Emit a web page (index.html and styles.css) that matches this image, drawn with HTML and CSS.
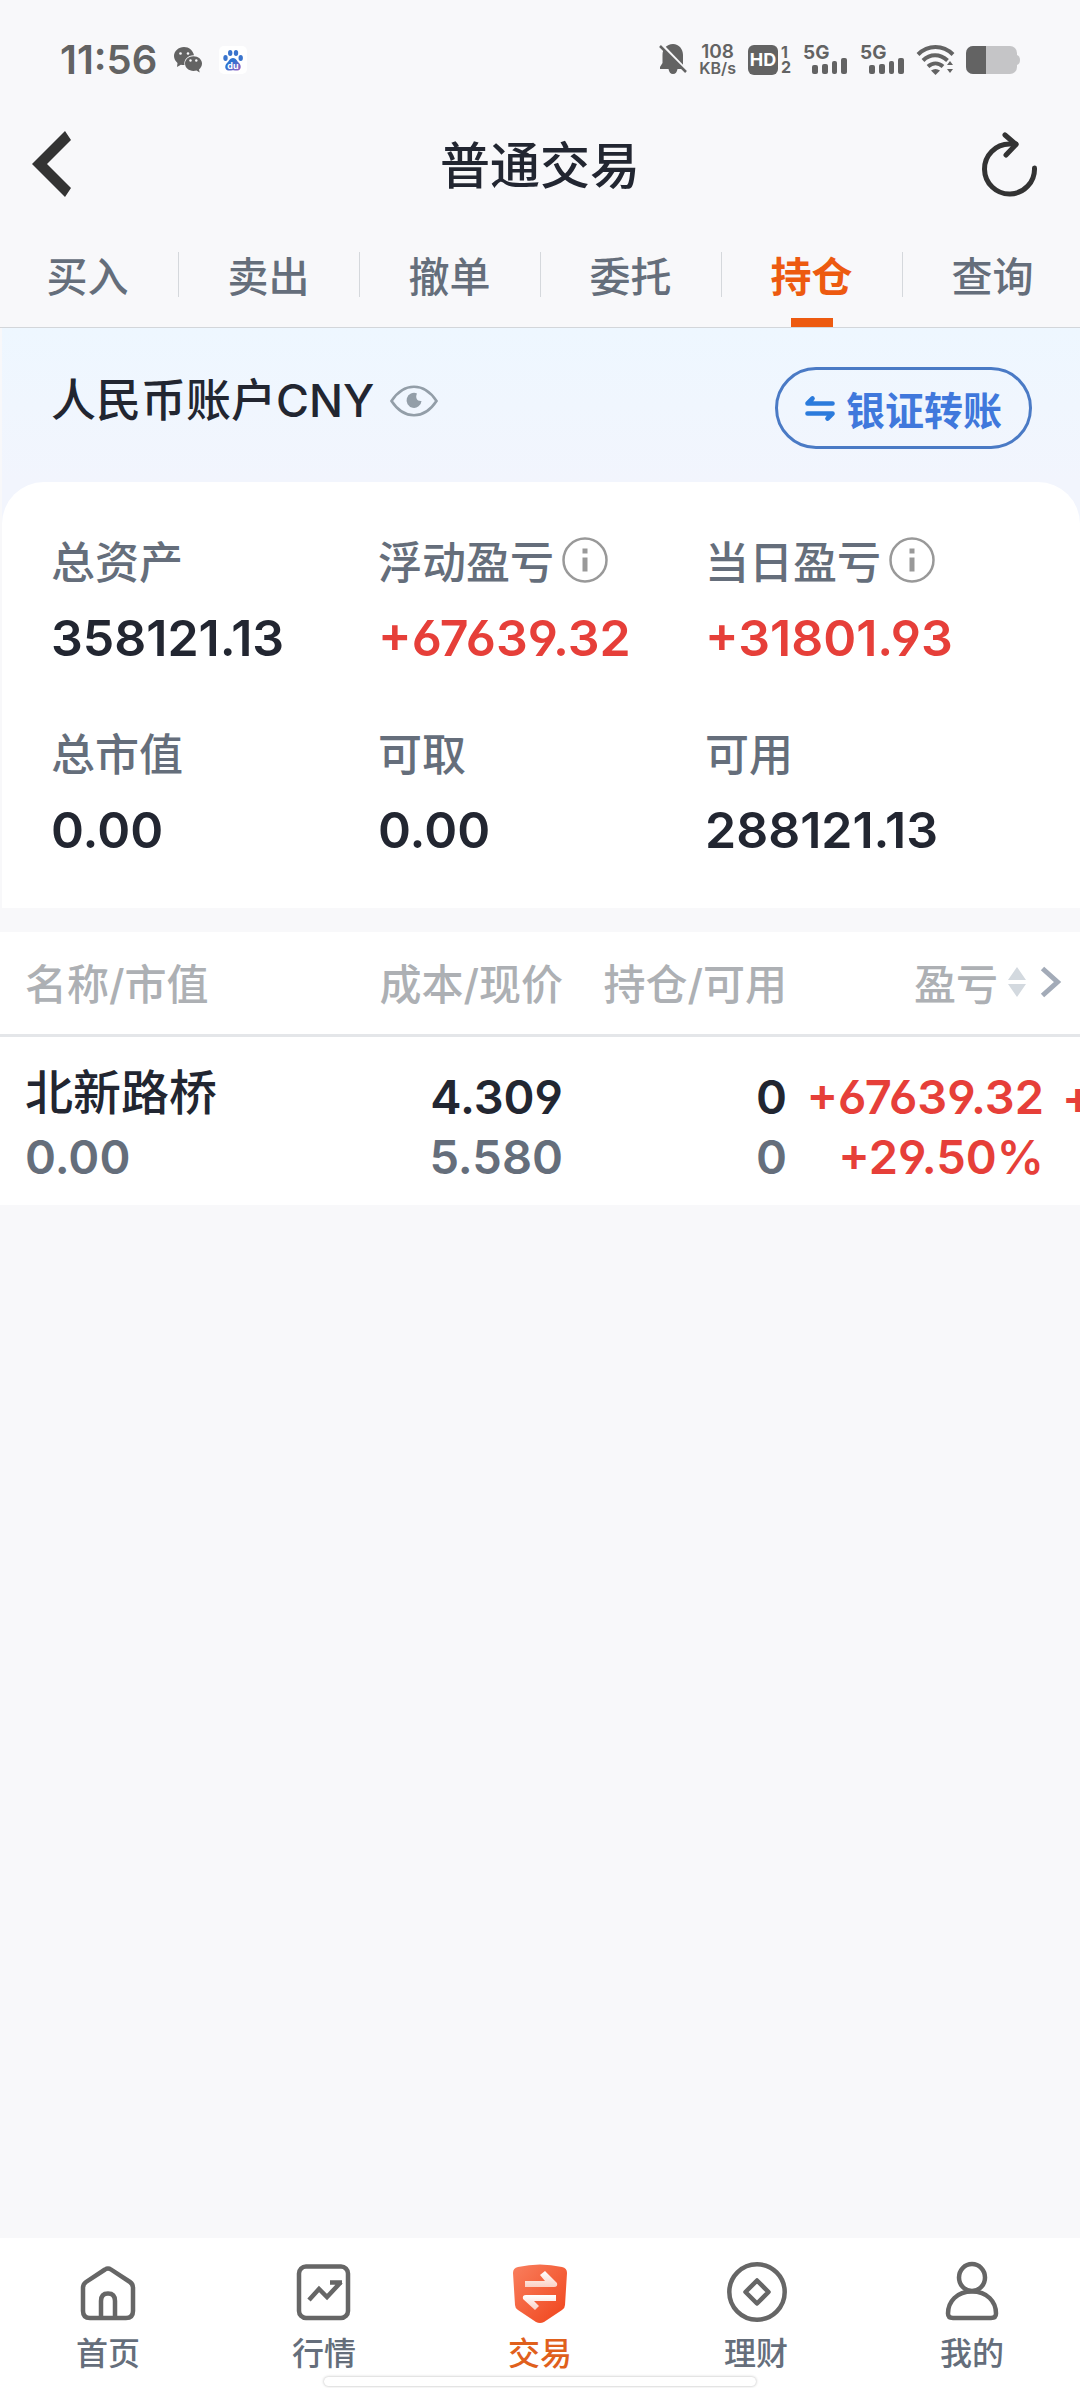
FILE: index.html
```html
<!DOCTYPE html>
<html lang="zh-CN">
<head>
    <meta charset="UTF-8">
    <meta name="viewport" content="width=device-width, initial-scale=1.0">
    <title>普通交易</title>
    <link rel="stylesheet" href="styles.css">
</head>
<body>
    <div class="app">
        <div class="status-bar">
            <div class="status-left">
                <span class="clock">11:56</span>
                <svg width="28" height="26" viewBox="0 0 28 26">
                    <path d="M10 0C4.500 0 0 4 0 9c0 3 1.500 5.300 3.500 6.900L3 20l3.900-2.300c1.200.3 2.300.4 3.600.3C9.500 12.500 14 8 20 8.200 19 3.500 15 0 10 0z" fill="#636363"/>
                    <path d="M19.500 9.300c-4.700 0-8.500 3.200-8.500 7.300s3.800 7.400 8.500 7.400c1 0 2-.2 3-.4l3.200 1.900-.7-3c1.800-1.400 3-3.500 3-5.900 0-4.100-3.800-7.300-8.500-7.300z" fill="#636363"/>
                    <g fill="#f8f8fa"><circle cx="6.500" cy="6.500" r="1.300"/><circle cx="14" cy="6.500" r="1.300"/><circle cx="16.500" cy="13.500" r="1.200"/><circle cx="22.300" cy="13.500" r="1.200"/></g>
                </svg>
                <svg width="28" height="28" viewBox="0 0 28 28">
                    <defs>
                        <linearGradient id="paw" x1="0" y1="0" x2="1" y2="1">
                            <stop offset="0.400" stop-color="#2f73d0"/>
                            <stop offset="1" stop-color="#a05fc0"/>
                        </linearGradient>
                    </defs>
                    <rect width="28" height="28" rx="5" fill="#fff"/>
                    <g fill="#3a74cd"><ellipse cx="6.500" cy="12" rx="2.200" ry="3"/><ellipse cx="11.200" cy="7" rx="2.200" ry="3"/><ellipse cx="17" cy="7" rx="2.200" ry="3"/><ellipse cx="21.700" cy="12" rx="2.200" ry="3"/></g>
                    <path d="M14 12c3 0 4 3 6 5 2.500 2.300 2.500 7-1.500 7.500-2 .2-3-.3-4.500-.3s-2.500.5-4.500.3C5.500 24 5.500 19.300 8 17c2-2 3-5 6-5z" fill="url(#paw)"/>
                    <text class="paw-text" x="14" y="22.500" text-anchor="middle">du</text>
                </svg>
            </div>
            <div class="status-right">
                <svg width="28" height="31" viewBox="0 0 28 31">
                    <path d="M14 0C7.500 0 3.500 5 3.500 11v8L1 23v2h8.500c.5 3 2 5 4.500 5s4-2 4.500-5H25l-1-4V11c0-6-4-11-10-11z" fill="#636363"/>
                    <path d="M3 1l25 26" stroke="#f8f8fa" stroke-width="3"/>
                    <path d="M1 2l26 26" stroke="#636363" stroke-width="2.500"/>
                </svg>
                <span class="speed"><span>108</span><span class="unit">KB/s</span></span>
                <span class="hd-group">
                    <span class="hd">HD</span>
                    <span class="sims"><span>1</span><span>2</span></span>
                </span>
                <svg width="45" height="31" viewBox="0 0 45 31">
                    <text class="net" x="0" y="15">5G</text>
                    <g fill="#636363"><rect x="9" y="21" width="6" height="9" rx="2"/><rect x="19" y="20" width="6" height="10" rx="2"/><rect x="29" y="17" width="5" height="13" rx="2"/><rect x="38" y="14" width="6" height="16" rx="2"/></g>
                </svg>
                <svg width="45" height="31" viewBox="0 0 45 31">
                    <text class="net" x="0" y="15">5G</text>
                    <g fill="#636363"><rect x="9" y="21" width="6" height="9" rx="2"/><rect x="19" y="20" width="6" height="10" rx="2"/><rect x="29" y="17" width="5" height="13" rx="2"/><rect x="38" y="14" width="6" height="16" rx="2"/></g>
                </svg>
                <svg width="37" height="30" viewBox="0 0 37 30">
                    <g fill="none" stroke="#636363" stroke-width="4"><path d="M1 9.500C11-.5 26-.5 36 9.500"/><path d="M6 15.500c7-7 17-7 24.500 0"/><path d="M11 21.500c4.500-4 10.500-4 15 0"/></g>
                    <path d="M14 25.500c3-2 6-2 9 0L18.500 30z" fill="#636363"/>
                    <path d="M30 20l3-4 3 4zM30 24l3 4 3-4z" fill="#636363"/>
                </svg>
                <svg width="54" height="28" viewBox="0 0 54 28">
                    <rect width="51" height="28" rx="7" fill="#c5c5c7"/>
                    <path d="M51 9q3 1 3 5t-3 5z" fill="#c5c5c7"/>
                    <path d="M7 0h13v28H7a7 7 0 0 1-7-7V7a7 7 0 0 1 7-7z" fill="#636363"/>
                </svg>
            </div>
        </div>

        <header class="title-bar">
            <button class="icon-btn" type="button" aria-label="返回">
                <svg width="40" height="68" viewBox="0 0 40 68">
                    <path d="M33 1l6 9-24 24 24 24-6 9L0 34z" fill="#333"/>
                </svg>
            </button>
            <h1>普通交易</h1>
            <button class="icon-btn refresh" type="button" aria-label="刷新">
                <svg width="56" height="66" viewBox="0 0 56 66">
                    <g fill="none" stroke="#333" stroke-width="5" stroke-linecap="round" stroke-linejoin="round">
                        <path d="M52.500 37A25 25 0 1 1 27.500 13H34"/>
                        <path d="M23 4l11 9.500L24 24"/>
                    </g>
                </svg>
            </button>
        </header>

        <nav class="tabs">
            <a class="tab" href="#">买入</a>
            <a class="tab" href="#">卖出</a>
            <a class="tab" href="#">撤单</a>
            <a class="tab" href="#">委托</a>
            <a class="tab active" href="#">持仓</a>
            <a class="tab" href="#">查询</a>
        </nav>

        <main>
            <section class="account">
                <div class="account-head">
                    <div class="account-name">
                        <h2>人民币账户CNY</h2>
                        <button class="icon-btn" type="button" aria-label="隐藏金额">
                            <svg width="48" height="32" viewBox="0 0 48 32">
                                <path d="M1.500 16C14-3 34-3 46.500 16 34 35 14 35 1.500 16z" fill="none" stroke="#939ea8" stroke-width="2.600"/>
                                <path d="M27 8.500c-2 4 0 8 4.500 7.500a7.500 7.500 0 1 1-4.500-7.500z" fill="#939ea8"/>
                            </svg>
                        </button>
                    </div>
                    <button class="transfer" type="button">
                        <svg width="30" height="26" viewBox="0 0 30 26">
                            <g fill="none" stroke="#2b7bdc" stroke-width="4.600" stroke-linecap="round" stroke-linejoin="round">
                                <path d="M27.500 8.500h-25l5-5"/>
                                <path d="M2.500 18.500h25l-5 5"/>
                            </g>
                        </svg>
                        银证转账
                    </button>
                </div>
                <dl class="summary">
                    <div class="item">
                        <dt>总资产</dt>
                        <dd>358121.13</dd>
                    </div>
                    <div class="item">
                        <dt>浮动盈亏<svg class="info" width="46" height="46" viewBox="0 0 46 46"><circle cx="23" cy="23" r="21.500" fill="none" stroke="#999" stroke-width="2.500"/><path d="M20.500 11.500h5v5h-5zM20.500 20.500h5v14h-5z" fill="#999"/></svg></dt>
                        <dd class="up">+67639.32</dd>
                    </div>
                    <div class="item">
                        <dt>当日盈亏<svg class="info" width="46" height="46" viewBox="0 0 46 46"><circle cx="23" cy="23" r="21.500" fill="none" stroke="#999" stroke-width="2.500"/><path d="M20.500 11.500h5v5h-5zM20.500 20.500h5v14h-5z" fill="#999"/></svg></dt>
                        <dd class="up">+31801.93</dd>
                    </div>
                    <div class="item">
                        <dt>总市值</dt>
                        <dd>0.00</dd>
                    </div>
                    <div class="item">
                        <dt>可取</dt>
                        <dd>0.00</dd>
                    </div>
                    <div class="item">
                        <dt>可用</dt>
                        <dd>288121.13</dd>
                    </div>
                </dl>
            </section>

            <section class="positions">
                <table>
                    <colgroup>
                        <col class="w-name">
                        <col class="w-cost">
                        <col class="w-hold">
                        <col class="w-profit">
                        <col>
                    </colgroup>
                    <thead>
                        <tr>
                            <th class="first">名称/市值</th>
                            <th>成本/现价</th>
                            <th>持仓/可用</th>
                            <th colspan="2">
                                <div class="sort">
                                    盈亏
                                    <svg width="18" height="32" viewBox="0 0 18 32"><path d="M0 14L9 1l9 13zM0 18l9 13 9-13z" fill="#d3d9df"/></svg>
                                    <svg class="more" width="21" height="32" viewBox="0 0 21 32"><path d="M2.500 2.500L17.500 16l-15 13.500" fill="none" stroke="#a3abb8" stroke-width="5"/></svg>
                                </div>
                            </th>
                        </tr>
                    </thead>
                    <tbody>
                        <tr>
                            <td class="first"><span class="stock">北新路桥</span><span class="sub">0.00</span></td>
                            <td><span>4.309</span><span class="sub">5.580</span></td>
                            <td><span>0</span><span class="sub">0</span></td>
                            <td class="up"><span>+67639.32</span><span>+29.50%</span></td>
                            <td class="up next"><span>+</span><span></span></td>
                        </tr>
                    </tbody>
                </table>
            </section>
        </main>

        <nav class="bottom-nav">
            <a href="#">
                <svg width="60" height="62" viewBox="0 0 60 62">
                    <g fill="none" stroke="#666" stroke-width="4.500" stroke-linejoin="round">
                        <path d="M27 7.500q3-2 6 0l19 12.500q3 2 3 6v23q0 7-7 7H12q-7 0-7-7V26q0-4 3-6z"/>
                        <path d="M23 56V39q0-7.500 7-7.500t7 7.500v17"/>
                    </g>
                </svg>
                首页
            </a>
            <a href="#">
                <svg width="60" height="62" viewBox="0 0 60 62">
                    <g fill="none" stroke="#666" stroke-width="4.500">
                        <rect x="5" y="4.500" width="49" height="51.500" rx="7"/>
                        <path d="M15 38l10-11 8 8 14-15M36 20.500h12"/>
                    </g>
                </svg>
                行情
            </a>
            <a class="active" href="#">
                <svg width="60" height="62" viewBox="0 0 60 62">
                    <defs>
                        <linearGradient id="shield" x1="0" y1="0" x2="1" y2="1">
                            <stop offset="0" stop-color="#f97f5e"/>
                            <stop offset="1" stop-color="#f0431a"/>
                        </linearGradient>
                        <linearGradient id="arrow" x1="0" y1="0" x2="0" y2="1">
                            <stop offset="0" stop-color="#fff"/>
                            <stop offset="1" stop-color="#fbd0c4"/>
                        </linearGradient>
                    </defs>
                    <path d="M8 5Q30 0 52 5q5 1 5 6l-2 32q0 3-3 5L34 60q-4 2-8 0L8 48q-3-2-3-5L3 11q0-5 5-6z" fill="url(#shield)"/>
                    <path d="M15 19h20l-5-6 5-4 12 12q1 4-3 4H15z" fill="url(#arrow)"/>
                    <path d="M46 33H16q-4 0-3 4l12 11 4-4-5-5h22z" fill="url(#arrow)"/>
                </svg>
                交易
            </a>
            <a href="#">
                <svg width="60" height="62" viewBox="0 0 60 62">
                    <g fill="none" stroke="#666" stroke-width="4.500" stroke-linejoin="round">
                        <circle cx="31" cy="30" r="27.700"/>
                        <path d="M31 18.500L42.500 30 31 41.500 19.500 30z"/>
                    </g>
                </svg>
                理财
            </a>
            <a href="#">
                <svg width="60" height="62" viewBox="0 0 60 62">
                    <g fill="none" stroke="#666" stroke-width="4.500">
                        <ellipse cx="30" cy="15.500" rx="13" ry="13.500"/>
                        <path d="M30 29.500c15 0 24 10 24 22q0 4.500-5 4.500H11q-5 0-5-4.500c0-12 9-22 24-22z"/>
                    </g>
                </svg>
                我的
            </a>
            <div class="home-indicator"></div>
        </nav>
    </div>
</body>
</html>
```

FILE: styles.css
```css
* {
    box-sizing: border-box;
}
body {
    margin: 0;
    background: #f8f8fa;
    color: #222631;
    font-family: Inter, "Noto Sans CJK SC", sans-serif;
    font-weight: 500;
}
h1, h2, dl, dd {
    margin: 0;
    font-weight: 500;
}
a {
    color: inherit;
    text-decoration: none;
}
button {
    font: inherit;
    cursor: pointer;
}
svg {
    display: block;
    flex: none;
    overflow: visible;
}
.app {
    min-height: 100vh;
    display: flex;
    flex-direction: column;
    overflow: hidden;
}
main {
    flex: 1;
}
.icon-btn {
    padding: 0;
    border: 0;
    background: none;
}

/* status bar */
.status-bar {
    height: 114px;
    padding: 5px 60px 0;
    display: flex;
    align-items: center;
    justify-content: space-between;
    color: #636363;
}
.status-left,
.status-right {
    display: flex;
    align-items: center;
}
.status-left {
    gap: 17px;
}
.status-right {
    gap: 12px;
}
.clock {
    font-size: 40px;
    font-weight: 600;
}
.paw-text {
    font-size: 9px;
    font-weight: 700;
    fill: #fff;
}
.speed {
    display: flex;
    flex-direction: column;
    align-items: center;
    font-size: 19px;
    font-weight: 600;
    line-height: 17px;
}
.unit {
    font-size: 16px;
}
.hd-group {
    display: flex;
    gap: 3px;
}
.hd {
    width: 30px;
    height: 30px;
    border-radius: 6px;
    background: #636363;
    color: #fff;
    font-size: 18px;
    font-weight: 700;
    line-height: 30px;
    text-align: center;
}
.sims {
    display: flex;
    flex-direction: column;
    font-size: 16px;
    font-weight: 700;
    line-height: 15px;
}
.net {
    font-size: 19px;
    font-weight: 700;
    fill: #636363;
}

/* title bar */
.title-bar {
    height: 100px;
    padding: 0 42px 0 32px;
    display: grid;
    grid-template-columns: 56px 1fr 46px;
    align-items: center;
}
.title-bar h1 {
    font-size: 50px;
    line-height: 72px;
    padding-top: 4px;
    text-align: center;
}
.refresh {
    justify-self: end;
}

/* tabs */
.tabs {
    display: grid;
    grid-template-columns: repeat(6, 1fr);
    height: 114px;
    margin: 0 -3px;
    border-bottom: 1px solid #d3d6da;
}
.tab {
    position: relative;
    padding-top: 33px;
    color: #656e7b;
    font-size: 41px;
    line-height: 60px;
    text-align: center;
}
.tab + .tab::before {
    content: "";
    position: absolute;
    left: 0;
    top: 38px;
    width: 1px;
    height: 45px;
    background: #d5d8dc;
}
.tab.active {
    color: #ed5a10;
    font-weight: 700;
}
.tab.active::after {
    content: "";
    position: absolute;
    left: 50%;
    bottom: 0;
    width: 42px;
    height: 9px;
    margin-left: -21px;
    background: #ed5a10;
}

/* account */
.account {
    margin-left: 2px;
    background: linear-gradient(#eef7ff, #f2f5fd 154px);
}
.account-head {
    height: 154px;
    padding: 6px 48px 0 49px;
    display: flex;
    align-items: center;
    justify-content: space-between;
}
.account-name {
    display: flex;
    align-items: center;
    gap: 16px;
    padding-bottom: 14px;
}
.account-name h2 {
    font-size: 45px;
    line-height: 60px;
}
.transfer {
    display: flex;
    align-items: center;
    gap: 11px;
    height: 82px;
    padding: 0 27px;
    border: 3px solid #4a7ac5;
    border-radius: 41px;
    background: none;
    color: #4078dc;
    font-size: 39px;
    font-weight: 700;
}
.summary {
    display: grid;
    grid-template-columns: repeat(3, 1fr);
    row-gap: 36px;
    padding: 46px 48px 32px 49px;
    border-radius: 42px 42px 0 0;
    background: #fff;
}
.item dt {
    display: flex;
    align-items: center;
    height: 64px;
    color: #656e7b;
    font-size: 44px;
    white-space: nowrap;
}
.item dd {
    height: 92px;
    font-size: 50px;
    font-weight: 600;
    font-feature-settings: "cv03", "cv04";
    line-height: 92px;
}
.info {
    margin-left: 8px;
}
.up {
    color: #e63f39;
}

/* positions */
.positions {
    margin-top: 24px;
    background: #fff;
}
table {
    width: 100%;
    border-collapse: separate;
    border-spacing: 0;
    table-layout: fixed;
}
.w-name {
    width: 340px;
}
.w-cost {
    width: 223px;
}
.w-hold {
    width: 224px;
}
.w-profit {
    width: 257px;
}
th, td {
    padding: 0;
    text-align: right;
    white-space: nowrap;
}
th {
    height: 105px;
    padding-bottom: 3px;
    border-bottom: 3px solid #e4e6e9;
    color: #adb0b4;
    font-size: 42px;
    font-weight: 500;
}
td {
    height: 168px;
    padding-top: 12px;
    font-size: 47px;
    font-weight: 600;
    font-feature-settings: "cv03", "cv04";
    line-height: 60px;
}
td span {
    display: block;
    min-height: 60px;
}
.first {
    padding-left: 25px;
    text-align: left;
}
.next {
    padding-left: 18px;
    text-align: left;
}
.sub {
    color: #656e7b;
}
.stock {
    font-size: 48px;
    font-weight: 500;
    line-height: 52px;
}
.sort {
    display: flex;
    align-items: center;
    justify-content: flex-end;
    gap: 10px;
    padding-right: 19px;
}
.more {
    margin-left: 4px;
}

/* bottom nav */
.bottom-nav {
    position: relative;
    display: grid;
    grid-template-columns: repeat(5, 1fr);
    height: 150px;
    background: #fff;
    color: #656e7b;
    font-size: 32px;
    line-height: 46px;
}
.bottom-nav a {
    display: flex;
    flex-direction: column;
    align-items: center;
    gap: 7px;
    padding-top: 24px;
}
.bottom-nav .active {
    color: #e0601c;
}
.home-indicator {
    position: absolute;
    left: 50%;
    bottom: 2px;
    width: 40%;
    height: 9px;
    transform: translateX(-50%);
    border-radius: 5px;
    background: #fff;
    box-shadow: 0 0 3px rgba(0, 0, 0, 0.3);
}
```
